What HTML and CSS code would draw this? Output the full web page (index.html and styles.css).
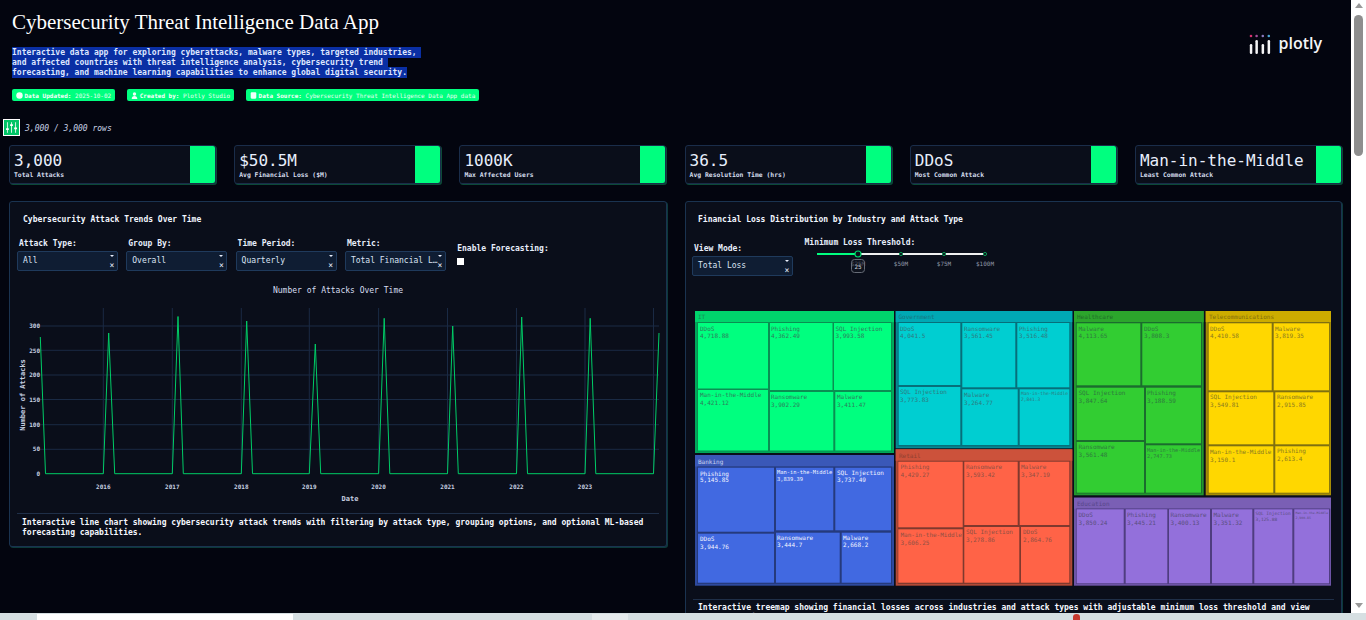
FILE: index.html
```html
<!DOCTYPE html>
<html lang="en">
<head>
<meta charset="utf-8">
<title>Cybersecurity Threat Intelligence Data App</title>
<link rel="stylesheet" href="styles.css">
</head>
<body>
<div class="window">
  <div class="viewport">
    <main class="app">
      <header class="header">
        <div class="intro">
          <h1>Cybersecurity Threat Intelligence Data App</h1>
          <p class="desc"><span>Interactive data app for exploring cyberattacks, malware types, targeted industries, 
and affected countries with threat intelligence analysis, cybersecurity trend 
forecasting, and machine learning capabilities to enhance global digital security.</span></p>
          <div class="pills">
            <span class="pill"><svg class="pill-ico" viewBox="0 0 10 10"><circle cx="5" cy="5" r="4.6"/></svg><b>Data Updated:</b> 2025-10-02</span>
            <span class="pill"><svg class="pill-ico" viewBox="0 0 10 10"><circle cx="5" cy="2.8" r="2.4"/><path d="M1 10c0-3 1.6-4.4 4-4.4S9 7 9 10z"/></svg><b>Created by:</b> Plotly Studio</span>
            <span class="pill"><svg class="pill-ico" viewBox="0 0 10 10"><rect x="1" y="0.5" width="8" height="9" rx="1.5"/></svg><b>Data Source:</b> Cybersecurity Threat Intelligence Data App data</span>
          </div>
        </div>
        <div class="logo">
          <svg class="logo-mark" viewBox="0 0 22 20">
            <circle class="d1" cx="2" cy="2" r="1.3"/><circle class="d2" cx="7.6" cy="2" r="1.3"/><circle class="d3" cx="13.8" cy="2" r="1.3"/><circle class="d4" cx="19.8" cy="2" r="1.3"/>
            <rect class="bar" x="0.8" y="10" width="2.5" height="10" rx="1.2"/><rect class="bar" x="6.4" y="6" width="2.5" height="14" rx="1.2"/><rect class="bar" x="12.6" y="10" width="2.5" height="10" rx="1.2"/><rect class="bar" x="18.6" y="6" width="2.5" height="14" rx="1.2"/>
          </svg>
          <span class="logo-text">plotly</span>
        </div>
      </header>

      <div class="rowbar">
        <button class="filter-btn" type="button" aria-label="Filters">
          <svg viewBox="0 0 16 16"><path d="M3 1.5v13M8 1.5v13M13 1.5v13"/><path class="knob" d="M1.3 10h3.4M6.3 5h3.4M11.3 9h3.4"/></svg>
        </button>
        <em>3,000 / 3,000 rows</em>
      </div>

      <section class="kpis">
        <div class="kpi"><div class="kpi-body"><div class="kpi-val">3,000</div><div class="kpi-label">Total Attacks</div></div><div class="kpi-swatch"></div></div>
        <div class="kpi"><div class="kpi-body"><div class="kpi-val">$50.5M</div><div class="kpi-label">Avg Financial Loss ($M)</div></div><div class="kpi-swatch"></div></div>
        <div class="kpi"><div class="kpi-body"><div class="kpi-val">1000K</div><div class="kpi-label">Max Affected Users</div></div><div class="kpi-swatch"></div></div>
        <div class="kpi"><div class="kpi-body"><div class="kpi-val">36.5</div><div class="kpi-label">Avg Resolution Time (hrs)</div></div><div class="kpi-swatch"></div></div>
        <div class="kpi"><div class="kpi-body"><div class="kpi-val">DDoS</div><div class="kpi-label">Most Common Attack</div></div><div class="kpi-swatch"></div></div>
        <div class="kpi"><div class="kpi-body"><div class="kpi-val">Man-in-the-Middle</div><div class="kpi-label">Least Common Attack</div></div><div class="kpi-swatch"></div></div>
      </section>

      <section class="panels">
        <article class="card card-left">
          <h2 class="card-title">Cybersecurity Attack Trends Over Time</h2>
          <div class="controls">
            <div class="ctl"><label>Attack Type:</label><div class="dd"><span class="dd-val">All</span><span class="dd-ico"><i class="caret"></i><i class="clear">×</i></span></div></div>
            <div class="ctl"><label>Group By:</label><div class="dd"><span class="dd-val">Overall</span><span class="dd-ico"><i class="caret"></i><i class="clear">×</i></span></div></div>
            <div class="ctl"><label>Time Period:</label><div class="dd"><span class="dd-val">Quarterly</span><span class="dd-ico"><i class="caret"></i><i class="clear">×</i></span></div></div>
            <div class="ctl"><label>Metric:</label><div class="dd"><span class="dd-val">Total Financial Loss</span><span class="dd-ico"><i class="caret"></i><i class="clear">×</i></span></div></div>
            <div class="ctl ctl-check"><label>Enable Forecasting:</label><span class="check"></span></div>
          </div>
          <svg class="chart" viewBox="10 280 656 232">
            <text class="c-title" x="338" y="293" text-anchor="middle">Number of Attacks Over Time</text>
            <g class="grid">
              <path d="M40 326H659M40 350.3H659M40 375H659M40 399.5H659M40 424.7H659M40 449.3H659"/>
              <path d="M103.3 308V474M172.3 308V474M241.3 308V474M309.3 308V474M378.6 308V474M447.5 308V474M516.5 308V474M585 308V474M653.5 308V474"/>
            </g>
            <g class="ticks" text-anchor="end">
              <text x="40" y="328">300</text><text x="40" y="352.5">250</text><text x="40" y="377">200</text><text x="40" y="401.5">150</text><text x="40" y="426.7">100</text><text x="40" y="451.3">50</text><text x="40" y="475.7">0</text>
            </g>
            <g class="ticks" text-anchor="middle">
              <text x="103.3" y="489">2016</text><text x="172.3" y="489">2017</text><text x="241.3" y="489">2018</text><text x="309.3" y="489">2019</text><text x="378.6" y="489">2020</text><text x="447.5" y="489">2021</text><text x="516.5" y="489">2022</text><text x="585" y="489">2023</text>
            </g>
            <text class="axis" x="350" y="501" text-anchor="middle">Date</text>
            <text class="axis" transform="translate(24.5 395) rotate(-90)" text-anchor="middle">Number of Attacks</text>
            <polyline class="line" points="40.3,337 45.5,473.7 103.3,473.7 108.7,333 114.7,473.7 172.3,473.7 178,316.5 183.3,473.7 241.3,473.7 246.7,321 252.5,473.7 309.3,473.7 315.3,344 320.7,473.7 378.6,473.7 384.2,318.3 389.8,473.7 447.5,473.7 452.7,326 458.3,473.7 516.5,473.7 521.7,317 527.5,473.7 585,473.7 590.2,318.3 595.8,473.7 653.5,473.7 659,333"/>
          </svg>
          <p class="caption">Interactive line chart showing cybersecurity attack trends with filtering by attack type, grouping options, and optional ML-based forecasting capabilities.</p>
        </article>

        <article class="card card-right">
          <h2 class="card-title">Financial Loss Distribution by Industry and Attack Type</h2>
          <div class="controls controls-right">
            <div class="ctl ctl-view"><label>View Mode:</label><div class="dd"><span class="dd-val">Total Loss</span><span class="dd-ico"><i class="caret"></i><i class="clear">×</i></span></div></div>
            <div class="ctl ctl-slider">
              <label>Minimum Loss Threshold:</label>
              <svg class="slider" viewBox="810 249 185 25">
                <path class="s-rest" d="M858 254H985"/><path class="s-fill" d="M817 254H858"/>
                <circle class="s-dot" cx="901" cy="254" r="1.6"/><circle class="s-dot" cx="944" cy="254" r="1.6"/><circle class="s-dot" cx="985" cy="254" r="1.6"/>
                <text class="s-tick" x="858" y="266" text-anchor="middle">$25M</text><text class="s-tick" x="901" y="266" text-anchor="middle">$50M</text><text class="s-tick" x="944" y="266" text-anchor="middle">$75M</text><text class="s-tick" x="985" y="266" text-anchor="middle">$100M</text>
                <circle class="s-handle" cx="858" cy="254" r="3"/>
                <rect class="s-tip" x="851.5" y="259.5" width="13" height="13" rx="3"/>
                <text class="s-tipt" x="858" y="268.5" text-anchor="middle">25</text>
              </svg>
            </div>
          </div>
          <svg class="treemap" viewBox="693 309 640 279">
            <g class="tm tm-it">
              <rect class="frame" x="695" y="311" width="199" height="142"/><rect class="head" x="695" y="311" width="199" height="11"/><rect class="gut" x="697" y="322" width="195" height="129.5"/>
              <text class="gl" x="698" y="319">IT</text>
              <rect class="tile" x="698" y="323" width="70" height="65.5"/><text x="700" y="331">DDoS</text><text x="700" y="338">4,718.88</text>
              <rect class="tile" x="770" y="323" width="62.5" height="67"/><text x="771" y="331">Phishing</text><text x="771" y="338">4,362.49</text>
              <rect class="tile" x="834" y="323" width="57" height="67"/><text x="835.5" y="331">SQL Injection</text><text x="835.5" y="338">3,993.58</text>
              <rect class="tile" x="698" y="390" width="70" height="60.5"/><text x="700" y="397">Man-in-the-Middle</text><text x="700" y="405">4,421.12</text>
              <rect class="tile" x="770" y="392" width="63.3" height="58.5"/><text x="771" y="399">Ransomware</text><text x="771" y="407">3,902.29</text>
              <rect class="tile" x="835.3" y="392" width="55.7" height="58.5"/><text x="837" y="399">Malware</text><text x="837" y="407">3,411.47</text>
            </g>
            <g class="tm tm-gov">
              <rect class="frame" x="895.7" y="311" width="176.6" height="137.3"/><rect class="head" x="895.7" y="311" width="176.6" height="11"/><rect class="gut" x="897.7" y="322" width="172.6" height="124.5"/>
              <text class="gl" x="898.5" y="319">Government</text>
              <rect class="tile" x="898.7" y="323" width="61.6" height="62"/><text x="900" y="331">DDoS</text><text x="900" y="338">4,041.5</text>
              <rect class="tile" x="898.7" y="387" width="61.6" height="58"/><text x="900" y="394">SQL Injection</text><text x="900" y="402">3,773.83</text>
              <rect class="tile" x="962.3" y="323" width="53" height="64.3"/><text x="964" y="331">Ransomware</text><text x="964" y="338">3,561.45</text>
              <rect class="tile" x="962.3" y="389.3" width="55.4" height="55.7"/><text x="964" y="397">Malware</text><text x="964" y="405">3,264.77</text>
              <rect class="tile" x="1017.3" y="323" width="52" height="64.3"/><text x="1019" y="331">Phishing</text><text x="1019" y="338">3,516.48</text>
              <rect class="tile" x="1019.7" y="389.3" width="49.6" height="55.7"/><text class="xs46" x="1021" y="395">Man-in-the-Middle</text><text class="xs46" x="1021" y="401">2,841.3</text>
            </g>
            <g class="tm tm-health">
              <rect class="frame" x="1074" y="311" width="129.7" height="184.3"/><rect class="head" x="1074" y="311" width="129.7" height="11"/><rect class="gut" x="1076" y="322" width="126" height="171.5"/>
              <text class="gl" x="1077" y="319">Healthcare</text>
              <rect class="tile" x="1076.7" y="323.3" width="63.6" height="62"/><text x="1078.5" y="331">Malware</text><text x="1078.5" y="338">4,113.65</text>
              <rect class="tile" x="1142.3" y="323.3" width="58.7" height="62"/><text x="1144" y="331">DDoS</text><text x="1144" y="338">3,808.3</text>
              <rect class="tile" x="1076.7" y="387.7" width="67.3" height="52.3"/><text x="1078.5" y="395">SQL Injection</text><text x="1078.5" y="403">3,847.64</text>
              <rect class="tile" x="1146" y="387.7" width="55" height="55.6"/><text x="1147" y="395">Phishing</text><text x="1147" y="403">3,188.59</text>
              <rect class="tile" x="1076.7" y="442" width="67.3" height="50.7"/><text x="1078.5" y="449">Ransomware</text><text x="1078.5" y="457">3,561.48</text>
              <rect class="tile" x="1146" y="445.3" width="55" height="47.4"/><text class="xs52" x="1147" y="452">Man-in-the-Middle</text><text class="xs52" x="1147" y="458">2,747.73</text>
            </g>
            <g class="tm tm-tel">
              <rect class="frame" x="1205.7" y="311" width="125.3" height="184.3"/><rect class="head" x="1205.7" y="311" width="125.3" height="11"/><rect class="gut" x="1207.7" y="322" width="122" height="171.5"/>
              <text class="gl" x="1209" y="319">Telecommunications</text>
              <rect class="tile" x="1208.7" y="323.3" width="63" height="67"/><text x="1210" y="331">DDoS</text><text x="1210" y="338">4,410.58</text>
              <rect class="tile" x="1273.7" y="323.3" width="55.3" height="67"/><text x="1275" y="331">Malware</text><text x="1275" y="338">3,819.35</text>
              <rect class="tile" x="1208.7" y="392.3" width="64.6" height="52"/><text x="1210" y="399">SQL Injection</text><text x="1210" y="407">3,549.81</text>
              <rect class="tile" x="1275.3" y="392.3" width="53.7" height="52"/><text x="1277" y="399">Ransomware</text><text x="1277" y="407">2,915.85</text>
              <rect class="tile" x="1208.7" y="446.3" width="64.6" height="46.4"/><text x="1210" y="454">Man-in-the-Middle</text><text x="1210" y="462">3,150.1</text>
              <rect class="tile" x="1275.3" y="446.3" width="53.7" height="46.4"/><text x="1277" y="453">Phishing</text><text x="1277" y="461">2,613.4</text>
            </g>
            <g class="tm tm-edu">
              <rect class="frame" x="1074" y="497.7" width="257" height="88"/><rect class="head" x="1074" y="497.7" width="257" height="11"/><rect class="gut" x="1076" y="508.5" width="254" height="75.5"/>
              <text class="gl" x="1077" y="505.5">Education</text>
              <rect class="tile" x="1076.7" y="509.3" width="47" height="74"/><text x="1078.5" y="517">DDoS</text><text x="1078.5" y="525">3,850.24</text>
              <rect class="tile" x="1125.7" y="509.3" width="41.6" height="74"/><text x="1127" y="517">Phishing</text><text x="1127" y="525">3,445.21</text>
              <rect class="tile" x="1169" y="509.3" width="41" height="74"/><text x="1170.5" y="517">Ransomware</text><text x="1170.5" y="525">3,400.13</text>
              <rect class="tile" x="1212" y="509.3" width="40.3" height="74"/><text x="1213.5" y="517">Malware</text><text x="1213.5" y="525">3,351.32</text>
              <rect class="tile" x="1254.3" y="509.3" width="38" height="74"/><text class="xs45" x="1255.5" y="515">SQL Injection</text><text class="xs45" x="1255.5" y="521">3,125.88</text>
              <rect class="tile" x="1294.3" y="509.3" width="34.7" height="74"/><text class="xs32" x="1295.5" y="514">Man-in-the-Middle</text><text class="xs32" x="1295.5" y="518.5">2,900.85</text>
            </g>
            <g class="tm tm-bank">
              <rect class="frame" x="695" y="455" width="199" height="130.7"/><rect class="head" x="695" y="455" width="199" height="11.5"/><rect class="gut" x="697" y="466.5" width="195" height="117.5"/>
              <text class="gl" x="698" y="463.5">Banking</text>
              <rect class="tile" x="698" y="467.7" width="76" height="64"/><text x="700" y="475.5">Phishing</text><text x="700" y="482">5,145.85</text>
              <rect class="tile" x="698" y="533.7" width="76" height="49"/><text x="700" y="541">DDoS</text><text x="700" y="549">3,944.76</text>
              <rect class="tile" x="776" y="467.7" width="57.3" height="62.6"/><text class="xs54" x="777" y="474">Man-in-the-Middle</text><text class="xs54" x="777" y="481">3,839.39</text>
              <rect class="tile" x="835.3" y="467.7" width="55.7" height="62.6"/><text x="837" y="475">SQL Injection</text><text x="837" y="482">3,737.49</text>
              <rect class="tile" x="776" y="532.7" width="63.7" height="50"/><text x="777" y="540">Ransomware</text><text x="777" y="547">3,444.7</text>
              <rect class="tile" x="841.7" y="532.7" width="49.3" height="50"/><text x="843" y="540">Malware</text><text x="843" y="547">2,668.2</text>
            </g>
            <g class="tm tm-retail">
              <rect class="frame" x="895.7" y="449.3" width="176.6" height="136.4"/><rect class="head" x="895.7" y="449.3" width="176.6" height="11.5"/><rect class="gut" x="897.7" y="460.8" width="172.6" height="123.2"/>
              <text class="gl" x="899" y="457.5">Retail</text>
              <rect class="tile" x="898.3" y="461.7" width="64.4" height="65.6"/><text x="900.5" y="469">Phishing</text><text x="900.5" y="477">4,429.27</text>
              <rect class="tile" x="898.3" y="529.3" width="64.4" height="53.4"/><text x="900.5" y="537">Man-in-the-Middle</text><text x="900.5" y="545">3,606.25</text>
              <rect class="tile" x="964.3" y="461.7" width="53.4" height="63.3"/><text x="966" y="469">Ransomware</text><text x="966" y="477">3,593.42</text>
              <rect class="tile" x="964.3" y="527" width="55" height="55.7"/><text x="966" y="534">SQL Injection</text><text x="966" y="542">3,278.86</text>
              <rect class="tile" x="1019.7" y="461.7" width="49.6" height="63.3"/><text x="1021" y="469">Malware</text><text x="1021" y="477">3,347.19</text>
              <rect class="tile" x="1021" y="527" width="48.3" height="55.7"/><text x="1023" y="534">DDoS</text><text x="1023" y="542">2,864.76</text>
            </g>
          </svg>
          <p class="caption">Interactive treemap showing financial losses across industries and attack types with adjustable minimum loss threshold and view mode selection.</p>
        </article>
      </section>
    </main>
    <div class="scrollbar">
      <span class="sb-up"></span>
      <span class="sb-thumb"></span>
      <span class="sb-fill"></span>
      <span class="sb-down"></span>
    </div>
  </div>
  <footer class="strip">
    <span class="st-a"></span><span class="st-b"></span><span class="st-c"></span><span class="st-d"></span><span class="st-e"></span><span class="st-f"></span>
  </footer>
</div>
</body>
</html>
```

FILE: styles.css
```css
* { box-sizing: border-box; }
html, body { margin: 0; padding: 0; height: 100%; overflow: hidden; }
body { background: #03050f; color: #e8eefc; font-family: "DejaVu Sans Mono", "Liberation Mono", monospace; font-size: 8px; }

.window { width: 1366px; height: 620px; display: flex; flex-direction: column; }
.viewport { flex: 0 0 613px; display: flex; min-height: 0; }
.app { flex: 1 1 auto; min-width: 0; height: 613px; padding: 0 9px; overflow: hidden; background: #03050f; }

/* header */
.header { display: flex; justify-content: space-between; height: 101px; padding-left: 3px; }
h1 { margin: 11px 0 14.5px; font: 400 21px/22px "Liberation Serif", serif; color: #fff; }
.desc { margin: 0; white-space: pre; line-height: 10px; font-size: 8px; font-weight: 700; color: #dfe7ff; }
.desc span { background: #0a2fa4; padding: 1px 0; }
.pills { display: flex; gap: 12px; margin-top: 11.5px; }
.pill { display: flex; align-items: center; height: 12px; padding: 0 4px; background: #00ff7f; border-radius: 2px; font-size: 6px; color: #e4fff1; white-space: pre; }
.pill b { color: #f8fffb; }
.pill-ico { width: 7px; height: 7px; margin-right: 1.5px; fill: #f2fff8; }

.logo { display: flex; align-items: flex-start; gap: 7px; margin: 34px 20px 0 0; }
.logo-mark { width: 22px; height: 20px; }
.logo-mark .bar { fill: #f4f4f6; }
.d1 { fill: #d6316f; } .d2 { fill: #a4509a; } .d3 { fill: #8d7bc0; } .d4 { fill: #4aa8d8; }
.logo-text { font: 600 16px/18px "Open Sans", Lato, sans-serif; color: #f4f4f6; }

/* row count */
.rowbar { display: flex; align-items: center; gap: 5px; height: 17px; margin: 18px 0 0 -6px; font-size: 8px; color: #c9d2e4; }
.rowbar em { padding-top: 1px; }
.filter-btn { width: 17px; height: 17px; padding: 1px; background: #00c566; border: 1px solid #fff; display: flex; }
.filter-btn svg { width: 100%; height: 100%; fill: none; stroke: #fff; stroke-width: 1; }
.filter-btn .knob { stroke-width: 2; }

/* KPIs */
.kpis { display: grid; grid-template-columns: repeat(6, 207px); column-gap: 18.2px; margin-top: 9px; }
.kpi { display: flex; height: 38.5px; background: #0a0e1a; border: 1px solid #1a2d4a; border-radius: 3px; box-shadow: 1px 1px 0 #0c4a38; overflow: hidden; }
.kpi-body { flex: 1 1 auto; min-width: 0; padding: 6px 0 0 4px; }
.kpi-val { font-size: 16px; line-height: 18px; color: #e8eefc; white-space: nowrap; }
.kpi-label { font-size: 6.4px; line-height: 8px; font-weight: 700; color: #d6deee; margin-top: 1px; }
.kpi-swatch { flex: 0 0 25px; background: #00ff7f; }

/* panels */
.panels { display: grid; grid-template-columns: 658px 657px; column-gap: 18px; align-items: start; margin-top: 17.5px; }
.card { background: #0a0e1a; border: 1px solid #1a3350; border-radius: 3px; box-shadow: 1px 1px 0 #0d3a3a; padding: 13px 7px 0; }
.card-left { height: 346px; }
.card-right { height: 460px; }
.card-title { margin: 0 0 0 6px; font-size: 8px; line-height: 10px; font-weight: 700; color: #f2f6ff; }
.card-right .card-title { margin-left: 5px; }
.controls { display: flex; align-items: flex-start; gap: 8.3px; margin-top: 14px; height: 37px; }
.ctl { display: flex; flex-direction: column; width: 101px; }
.ctl label { font-size: 8px; font-weight: 700; line-height: 10px; height: 12px; padding-left: 2px; color: #e8eefc; }
.ctl-check { margin: 5px 0 0 3px; }
.ctl-check label { padding-left: 0; }
.check { width: 7px; height: 7px; margin-top: 2px; background: #fff; }

.dd { display: flex; height: 20px; background: #0f1d33; border: 1px solid #1f3a5c; border-radius: 2px; font-size: 8px; color: #dbe4f4; }
.dd-val { flex: 1 1 auto; min-width: 0; margin-right: -2px; padding: 4px 0 0 5px; line-height: 10px; white-space: nowrap; overflow: hidden; text-overflow: ellipsis; }
.dd-ico { flex: 0 0 8px; display: flex; flex-direction: column; align-items: center; justify-content: space-between; padding: 2px 2px 0 0; }
.caret { width: 0; height: 0; border: 2px solid transparent; border-top-color: #e8eefc; border-bottom: 0; margin-top: 1px; }
.clear { font-style: normal; font-size: 8px; line-height: 8px; color: #e8eefc; }

.chart { display: block; width: 656px; height: 232px; margin: 4px 0 0 -7px; }
.grid path { fill: none; stroke: #1a2a44; stroke-width: 1; }
.ticks text { font-size: 6px; font-weight: 700; fill: #c6cfe0; }
.c-title { font-size: 8px; fill: #d7def0; }
.axis { font-size: 7px; font-weight: 700; fill: #c6cfe0; }
.line { fill: none; stroke: #00cc66; stroke-width: 1; }

.caption { margin: 1px 0 0; padding: 4px 5px 0; border-top: 1px solid #1f2f48; font-size: 8px; line-height: 10px; font-weight: 700; color: #f6f8ff; }

.controls-right { height: 71px; margin-top: 13px; gap: 9.5px; }
.ctl-view { margin: 6px 0 0 -1px; }
.ctl-slider { width: 190px; }
.slider { display: block; width: 185px; height: 25px; margin: -1px 0 0 7px; }
.s-rest { stroke: #f0f0f0; stroke-width: 2; }
.s-fill { stroke: #00ff7f; stroke-width: 2; }
.s-dot { fill: #0a0e1a; stroke: #0b9a55; stroke-width: 1; }
.s-handle { fill: #0a0e1a; stroke: #00d26a; stroke-width: 1.2; }
.s-tick { font-size: 6px; fill: #8f97a6; }
.s-tip { fill: rgba(20, 24, 34, .55); stroke: #666b76; stroke-width: 1; }
.s-tipt { font-size: 6px; fill: #c9cfda; }

.treemap { display: block; width: 640px; height: 279px; }
.tm text { font-size: 6px; fill: var(--txt, #3f4a48); }
.tm .frame { fill: var(--frame); }
.tm .head { fill: var(--head); }
.tm .gut { fill: var(--gut); }
.tm .tile { fill: var(--tile); }
.tm .gl { fill: var(--gltxt, #444); opacity: .8; }
.tm .xs46 { font-size: 4.6px; }
.tm .xs52 { font-size: 5.2px; }
.tm .xs54 { font-size: 5.4px; }
.tm .xs45 { font-size: 4.5px; }
.tm .xs32 { font-size: 3.2px; }
.tm-it { --frame: #00a85a; --head: #00d46c; --gut: #0a8f52; --tile: #00ff7f; --txt: #2f7d5c; --gltxt: #1f7a50; }
.tm-gov { --frame: #048a94; --head: #00a8b4; --gut: #076f7a; --tile: #00ced1; --txt: #2f7a80; --gltxt: #1f6a72; }
.tm-health { --frame: #23962f; --head: #2ca52c; --gut: #1b6c2e; --tile: #32cd32; --txt: #2f7a3f; --gltxt: #1f5f2a; }
.tm-tel { --frame: #a58c06; --head: #ccac00; --gut: #7f7010; --tile: #ffd700; --txt: #8a7a20; --gltxt: #6f5f10; }
.tm-edu { --frame: #6d54a6; --head: #7a5fb5; --gut: #4f3d80; --tile: #9370db; --txt: #5a4f80; --gltxt: #4f4080; }
.tm-bank { --frame: #2e4a9e; --head: #3a58b8; --gut: #253a7c; --tile: #4169e1; --txt: #f2f5ff; --gltxt: #e8edff; }
.tm-retail { --frame: #b24a36; --head: #cc523b; --gut: #7f392e; --tile: #ff6347; --txt: #8f5044; --gltxt: #7f3d30; }

.card-right .caption { margin: 11px 0 0; padding-top: 3px; }

/* window chrome */
.scrollbar { flex: 0 0 15px; display: flex; flex-direction: column; align-items: center; background: #fff; padding: 3px 0; }
.sb-up { width: 0; height: 0; border: 4.5px solid transparent; border-bottom: 5px solid #999; border-top: 0; }
.sb-thumb { width: 9px; height: 141px; margin-top: 6.5px; background: #8e8e8e; border-radius: 4.5px; }
.sb-fill { flex: 1 1 auto; }
.sb-down { width: 0; height: 0; border: 4.5px solid transparent; border-top: 5px solid #999; border-bottom: 0; margin-bottom: 2px; }

.strip { flex: 0 0 7px; display: flex; padding-top: 1px; background: #d6dfe2; }
.st-a { flex: 0 0 37px; }
.st-b { flex: 0 0 256px; background: #fff; }
.st-c { flex: 0 0 299px; }
.st-d { flex: 0 0 36px; background: #e6ebed; }
.st-e { flex: 0 0 445px; }
.st-f { flex: 0 0 7px; height: 6px; border-radius: 50% 50% 0 0; background: #c8392e; }
```
